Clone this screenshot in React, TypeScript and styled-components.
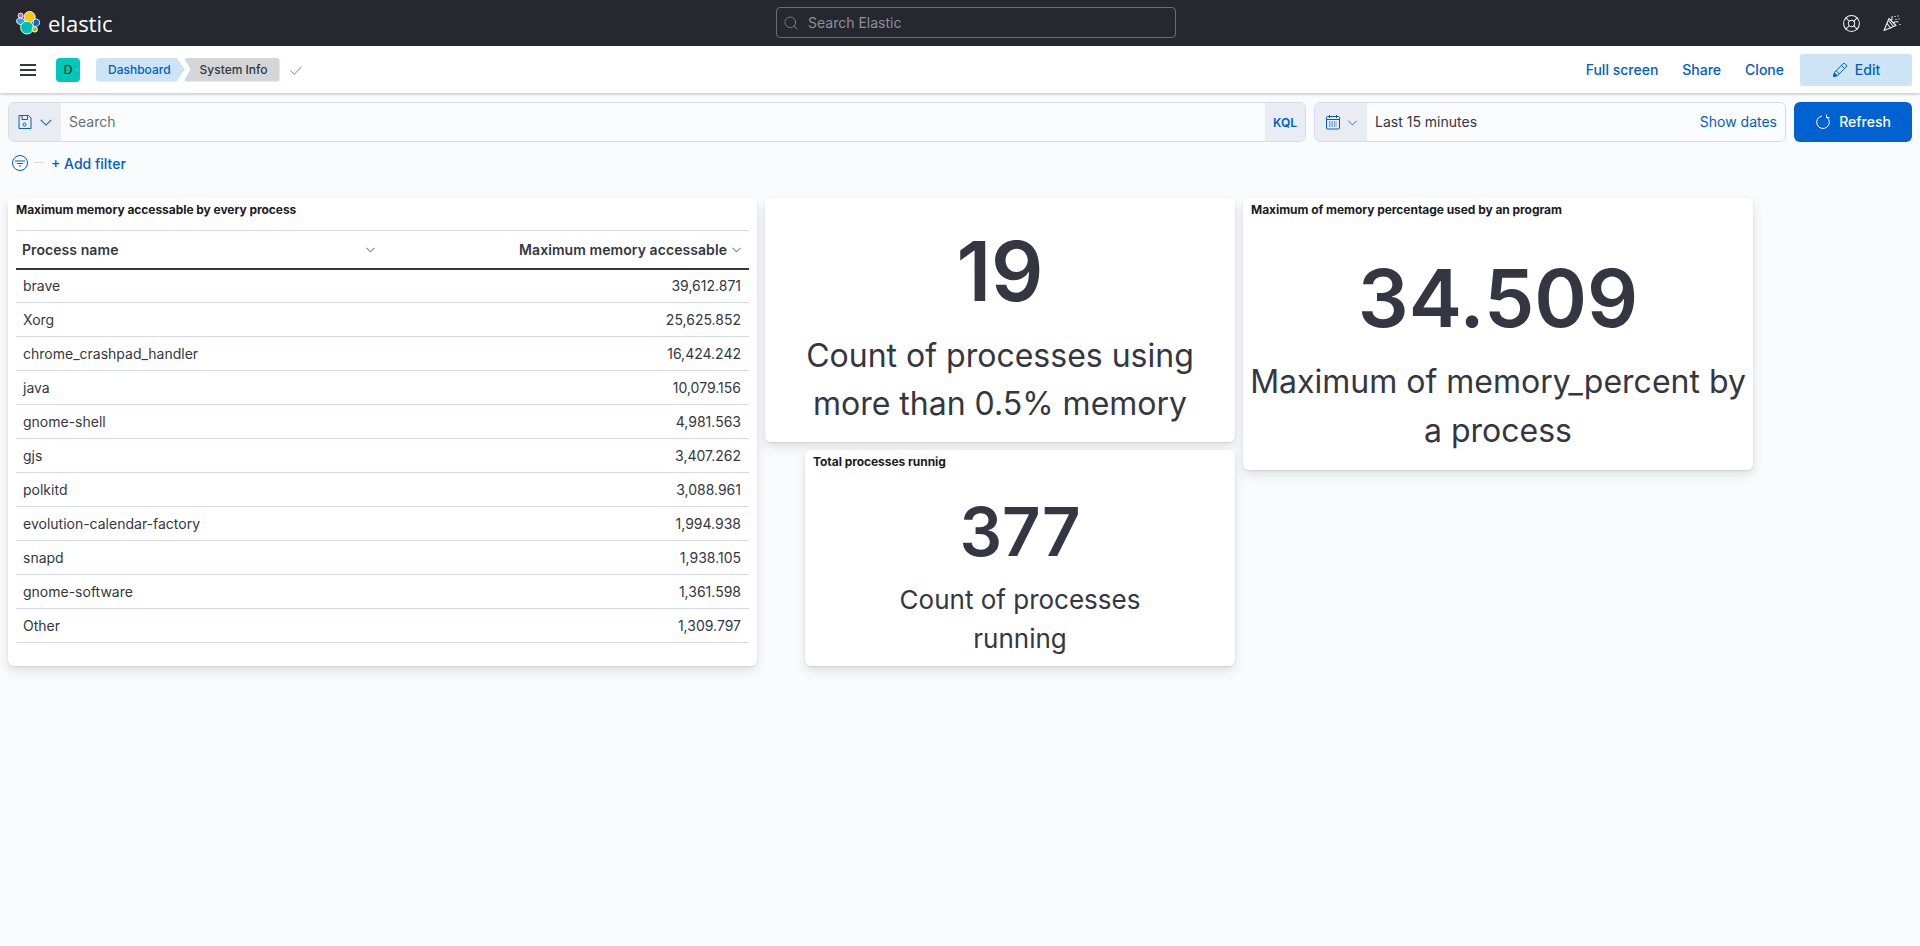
import React from "react";
import styled, { createGlobalStyle } from "styled-components";
import { LifeBuoy, Search } from "lucide-react";

const Global = createGlobalStyle`
  * { box-sizing: border-box; }
  html, body { margin: 0; padding: 0; }
  body {
    background: #fafbfd;
    color: #343741;
    font-family: Inter, "Liberation Sans", sans-serif;
    font-size: 14px;
    min-height: 946px;
    overflow: hidden;
  }
`;

const TopBar = styled.header`
  height: 46px;
  background: #25282f;
  display: grid;
  grid-template-columns: 776px 400px 1fr;
  align-items: center;
`;

const Brand = styled.div`
  display: flex;
  align-items: center;
  gap: 8px;
  padding-left: 16px;
`;

const Wordmark = styled.span`
  color: #fff;
  font-family: "Open Sans", sans-serif;
  font-size: 22px;
  font-weight: 400;
  line-height: 24px;
  margin-top: -1px;
`;

const GlobalSearch = styled.div`
  height: 31px;
  margin-top: -1px;
  border: 1px solid #6a6d73;
  border-radius: 4px;
  display: flex;
  align-items: center;
  gap: 9px;
  padding-left: 6px;
  color: #8d9097;
  font-size: 14px;
`;

const TopIcons = styled.div`
  display: flex;
  justify-content: flex-end;
  align-items: center;
  gap: 22px;
  padding-right: 19px;
  color: #f0f1f3;
`;

const SecondBar = styled.nav`
  height: 47px;
  background: #fff;
  box-shadow: 0 1px 3px rgba(65, 75, 95, 0.35);
  display: flex;
  align-items: center;
  padding: 0 8px 0 20px;
  position: relative;
`;

const Burger = styled.div`
  width: 16px;
  height: 12px;
  border-top: 2px solid #343741;
  border-bottom: 2px solid #343741;
  position: relative;
  &::after {
    content: "";
    position: absolute;
    left: 0;
    right: 0;
    top: 3px;
    height: 2px;
    background: #343741;
  }
`;

const Avatar = styled.div`
  width: 24px;
  height: 24px;
  margin-left: 20px;
  border-radius: 4px;
  background: #00c8b8;
  color: #000;
  font-size: 12px;
  display: flex;
  align-items: center;
  justify-content: center;
`;

const Crumbs = styled.div`
  display: flex;
  margin-left: 16px;
  height: 24px;
`;

const Crumb = styled.div<{ $active?: boolean }>`
  height: 24px;
  display: flex;
  align-items: center;
  font-size: 12px;
  font-weight: 500;
  border-radius: 4px;
  background: ${(p) => (p.$active ? "#d3d5d9" : "#cce4f5")};
  color: ${(p) => (p.$active ? "#343741" : "#005ec4")};
  padding: ${(p) => (p.$active ? "0 12px 0 16px" : "0 14px 0 12px")};
  margin-left: ${(p) => (p.$active ? "-1px" : "0")};
  clip-path: ${(p) =>
    p.$active
      ? "polygon(0 0, 100% 0, 100% 100%, 0 100%, 7px 50%)"
      : "polygon(0 0, calc(100% - 8px) 0, 100% 50%, calc(100% - 8px) 100%, 0 100%)"};
`;

const CheckWrap = styled.span`
  display: flex;
  margin-left: 9px;
  color: #69707d;
`;

const Actions = styled.div`
  margin-left: auto;
  display: flex;
  align-items: center;
  gap: 24px;
`;

const LinkButton = styled.span`
  color: #005ec4;
  font-size: 14px;
  font-weight: 500;
`;

const EditButton = styled.div`
  width: 112px;
  height: 32px;
  margin-left: -8px;
  border-radius: 3px;
  background: #cce4f5;
  color: #005ec4;
  font-size: 14px;
  font-weight: 500;
  display: flex;
  align-items: center;
  justify-content: center;
  gap: 7px;
`;

const QueryRow = styled.div`
  display: flex;
  gap: 8px;
  padding: 9px 8px 0;
`;

const InputGroup = styled.div<{ $width: number }>`
  width: ${(p) => p.$width}px;
  height: 40px;
  border: 1px solid #d6dbe9;
  border-radius: 6px;
  overflow: hidden;
  display: flex;
  align-items: stretch;
  background: #fbfcfd;
`;

const Prepend = styled.div<{ $width: number }>`
  width: ${(p) => p.$width}px;
  flex: none;
  background: #e9edf3;
  color: #005ec4;
  display: flex;
  align-items: center;
  justify-content: center;
  gap: 6px;
`;

const Placeholder = styled.div`
  flex: 1;
  display: flex;
  align-items: center;
  padding: 0 0 2px 8px;
  color: #69707d;
  font-size: 14px;
`;

const Kql = styled.div`
  width: 40px;
  background: #e9edf3;
  color: #005ec4;
  font-size: 12px;
  font-weight: 600;
  display: flex;
  align-items: center;
  justify-content: center;
  flex: none;
`;

const TimeText = styled.div`
  flex: 1;
  padding: 0 0 2px 8px;
  display: flex;
  align-items: center;
  color: #343741;
  font-size: 14px;
`;

const ShowDates = styled.div`
  display: flex;
  align-items: center;
  padding: 0 8px 2px 0;
  color: #005ec4;
  font-size: 14px;
`;

const RefreshButton = styled.div`
  width: 118px;
  height: 40px;
  border-radius: 6px;
  background: #0062d1;
  color: #fff;
  font-size: 14px;
  font-weight: 500;
  padding-bottom: 1px;
  display: flex;
  align-items: center;
  justify-content: center;
  gap: 8px;
`;

const FilterRow = styled.div`
  height: 24px;
  margin-top: 9px;
  padding-left: 12px;
  display: flex;
  align-items: center;
  color: #005ec4;
`;

const Dash = styled.span`
  width: 10px;
  height: 1px;
  margin: 0 0 2px 6px;
  background: #d3dae6;
`;

const AddFilter = styled.span`
  margin-left: 7px;
  font-size: 14px;
  font-weight: 500;
`;

const Board = styled.main`
  display: flex;
  align-items: flex-start;
  gap: 8px;
  padding: 23px 8px 0;
`;

const Panel = styled.section<{ $width: number; $height: number }>`
  width: ${(p) => p.$width}px;
  height: ${(p) => p.$height}px;
  flex: none;
  background: #fff;
  border-radius: 6px;
  box-shadow: 0 1px 2px rgba(65, 75, 95, 0.12), 0 4px 8px rgba(65, 75, 95, 0.1),
    0 8px 16px rgba(65, 75, 95, 0.05);
`;

const PanelTitle = styled.h2`
  margin: 0;
  height: 24px;
  padding-left: 8px;
  font-size: 12px;
  font-weight: 700;
  line-height: 24px;
  letter-spacing: -0.05px;
  color: #1a1c21;
`;

const MiddleColumn = styled.div`
  width: 470px;
  flex: none;
  display: flex;
  flex-direction: column;
  align-items: flex-end;
  gap: 8px;
`;

const TableWrap = styled.div`
  padding: 8px 8px 0;
`;

const DataTable = styled.table`
  width: 733px;
  border-collapse: collapse;
  table-layout: fixed;
  border-top: 1px solid #d3dae6;
`;

const HeadCell = styled.th`
  height: 38px;
  padding: 0 7px 0 6px;
  font-size: 14px;
  font-weight: 600;
  letter-spacing: 0.07px;
  color: #343741;
  border-bottom: 2px solid #343741;
  text-align: left;
`;

const HeadInner = styled.div<{ $right?: boolean }>`
  display: flex;
  align-items: center;
  justify-content: ${(p) => (p.$right ? "flex-end" : "space-between")};
  gap: 4px;
`;

const Cell = styled.td<{ $right?: boolean }>`
  height: 34px;
  padding: 0 8px 0 7px;
  font-size: 14px;
  font-weight: 400;
  color: #343741;
  border-bottom: 1px solid #d3dae6;
  text-align: ${(p) => (p.$right ? "right" : "left")};
`;

const MetricBody = styled.div<{ $top: number; $gap: number }>`
  display: flex;
  flex-direction: column;
  align-items: center;
  text-align: center;
  padding-top: ${(p) => p.$top}px;
  gap: ${(p) => p.$gap}px;
`;

const MetricValue = styled.div<{ $size: number }>`
  font-size: ${(p) => p.$size}px;
  line-height: ${(p) => Math.round(p.$size * 1.2)}px;
  font-weight: 600;
  color: #343741;
`;

const MetricLabel = styled.div<{ $size: number; $line: number; $width: number }>`
  width: ${(p) => p.$width}px;
  font-size: ${(p) => p.$size}px;
  line-height: ${(p) => p.$line}px;
  font-weight: 400;
  color: #343741;
`;

// colored blobs with the white outline the dark header version has
const ElasticLogo = () => (
  <svg width="24" height="24" viewBox="0 0 24 24" stroke="#fff" strokeWidth="0.9">
    <circle cx="4.6" cy="4.6" r="2.5" fill="#f04e98" />
    <circle cx="13.6" cy="6" r="5.6" fill="#fec514" />
    <path d="M2.6 7.2c2.2-.6 5.2 .6 6.6 2.8l-2.2 3.4c-2.6 .8-5.6-.2-6.3-2.4-.5-1.7 .4-3.4 1.9-3.8z" fill="#1ba9f5" />
    <path d="M17.6 8.6c2-1.2 4.900-.6 5.800 1.500 1 2.300-.5 4.700-2.900 5.200-1.300 .2-2.600-.1-3.700-1z" fill="#0b64dd" />
    <circle cx="11" cy="16.6" r="6.4" fill="#00bfb3" />
    <circle cx="18.8" cy="18.4" r="2.7" fill="#93c90e" />
  </svg>
);

const PartyIcon = () => (
  <svg width="18" height="18" viewBox="0 0 18 18" fill="none" stroke="currentColor" strokeWidth="1.1">
    <path d="M1 16.500L6 4.500l7 7z" strokeLinejoin="round" />
    <path d="M4 9.500l4 5M5.500 6.500l5 6" />
    <path d="M8 7c1-1.500 1.500-3 1-5M10 9c1.500-1 3.500-1.500 5.500-1" />
    <path d="M12 2v1M15 1.500v1M13 5v1M16 4.500v1M17 10v1" strokeWidth="1.3" />
  </svg>
);

const Chevron = ({ size = 14 }: { size?: number }) => (
  <svg width={size} height={size} viewBox="0 0 16 16" fill="none" stroke="currentColor" strokeWidth="1.2">
    <path d="M2 5.5l6 6 6-6" />
  </svg>
);

const SaveIcon = () => (
  <svg width="16" height="16" viewBox="0 0 16 16" fill="none" stroke="currentColor">
    <path d="M2 1.5h9.500l2.500 2.500v10.500h-12z" />
    <path d="M5 1.5v4h5.500v-4" />
    <circle cx="7.500" cy="10.500" r="1.500" />
  </svg>
);

const CalendarIcon = () => (
  <svg width="16" height="16" viewBox="0 0 16 16" fill="none" stroke="currentColor">
    <rect x="1.500" y="2.500" width="13" height="12.500" rx="1" />
    <path d="M1.500 5.500h13M4.500 1v3M11.500 1v3" />
    <path d="M4 8h8M4 10h8M4 12h8" strokeDasharray="1.4 1.1" strokeWidth="1.2" />
  </svg>
);

const RefreshIcon = () => (
  <svg width="16" height="16" viewBox="0 0 16 16" fill="none" stroke="currentColor">
    <path d="M11.800 3.200A6.300 6.300 0 1 1 7 2" />
    <path d="M11.500 .500v3h3" />
  </svg>
);

const PencilIcon = () => (
  <svg width="16" height="16" viewBox="0 0 16 16" fill="none" stroke="currentColor">
    <path d="M1.500 14.500l1-4.200 8.400-8.400a1.600 1.600 0 0 1 2.300 0l.9.900a1.600 1.600 0 0 1 0 2.300l-8.400 8.400z" />
    <path d="M4.500 9l3 3M9.500 3.500l3 3" />
    <path d="M1.500 14.500l1-3.500 2.500 2.500z" fill="currentColor" />
  </svg>
);

const FilterIcon = () => (
  <svg width="16" height="16" viewBox="0 0 16 16" fill="none" stroke="currentColor">
    <circle cx="8" cy="8" r="7.500" />
    <path d="M3 6h10M5 8.500h6M7 11h2" />
  </svg>
);

const CheckIcon = () => (
  <svg width="14" height="14" viewBox="0 0 16 16" fill="none" stroke="currentColor">
    <path d="M1.500 8.500l4.500 4.500L14.500 4" />
  </svg>
);

const rows = [
  ["brave", "39,612.871"],
  ["Xorg", "25,625.852"],
  ["chrome_crashpad_handler", "16,424.242"],
  ["java", "10,079.156"],
  ["gnome-shell", "4,981.563"],
  ["gjs", "3,407.262"],
  ["polkitd", "3,088.961"],
  ["evolution-calendar-factory", "1,994.938"],
  ["snapd", "1,938.105"],
  ["gnome-software", "1,361.598"],
  ["Other", "1,309.797"],
];

const App = () => {
  return (
    <>
      <Global />
      <TopBar>
        <Brand>
          <ElasticLogo />
          <Wordmark>elastic</Wordmark>
        </Brand>
        <GlobalSearch>
          <Search size={16} strokeWidth={1.2} />
          Search Elastic
        </GlobalSearch>
        <TopIcons>
          <LifeBuoy size={19} strokeWidth={1.3} />
          <PartyIcon />
        </TopIcons>
      </TopBar>
      <SecondBar>
        <Burger />
        <Avatar>D</Avatar>
        <Crumbs>
          <Crumb>Dashboard</Crumb>
          <Crumb $active>System Info</Crumb>
        </Crumbs>
        <CheckWrap>
          <CheckIcon />
        </CheckWrap>
        <Actions>
          <LinkButton>Full screen</LinkButton>
          <LinkButton>Share</LinkButton>
          <LinkButton>Clone</LinkButton>
          <EditButton>
            <PencilIcon />
            Edit
          </EditButton>
        </Actions>
      </SecondBar>
      <QueryRow>
        <InputGroup $width={1298}>
          <Prepend $width={52}>
            <SaveIcon />
            <Chevron />
          </Prepend>
          <Placeholder>Search</Placeholder>
          <Kql>KQL</Kql>
        </InputGroup>
        <InputGroup $width={472}>
          <Prepend $width={52}>
            <CalendarIcon />
            <Chevron size={11} />
          </Prepend>
          <TimeText>Last 15 minutes</TimeText>
          <ShowDates>Show dates</ShowDates>
        </InputGroup>
        <RefreshButton>
          <RefreshIcon />
          Refresh
        </RefreshButton>
      </QueryRow>
      <FilterRow>
        <FilterIcon />
        <Dash />
        <AddFilter>+ Add filter</AddFilter>
      </FilterRow>
      <Board>
        <Panel $width={749} $height={468}>
          <PanelTitle>Maximum memory accessable by every process</PanelTitle>
          <TableWrap>
            <DataTable>
              <thead>
                <tr>
                  <HeadCell>
                    <HeadInner>
                      Process name
                      <Chevron size={11} />
                    </HeadInner>
                  </HeadCell>
                  <HeadCell>
                    <HeadInner $right>
                      Maximum memory accessable
                      <Chevron size={11} />
                    </HeadInner>
                  </HeadCell>
                </tr>
              </thead>
              <tbody>
                {rows.map(([name, value]) => (
                  <tr key={name}>
                    <Cell>{name}</Cell>
                    <Cell $right>{value}</Cell>
                  </tr>
                ))}
              </tbody>
            </DataTable>
          </TableWrap>
        </Panel>
        <MiddleColumn>
          <Panel $width={470} $height={244}>
            <MetricBody $top={25} $gap={11}>
              <MetricValue $size={82}>19</MetricValue>
              <MetricLabel $size={32} $line={48} $width={440}>
                Count of processes using more than 0.5% memory
              </MetricLabel>
            </MetricBody>
          </Panel>
          <Panel $width={430} $height={216}>
            <PanelTitle>Total processes runnig</PanelTitle>
            <MetricBody $top={18} $gap={8}>
              <MetricValue $size={67}>377</MetricValue>
              <MetricLabel $size={26} $line={39} $width={300}>
                Count of processes running
              </MetricLabel>
            </MetricBody>
          </Panel>
        </MiddleColumn>
        <Panel $width={510} $height={272}>
          <PanelTitle>Maximum of memory percentage used by an program</PanelTitle>
          <MetricBody $top={28} $gap={11}>
            <MetricValue $size={80}>34.509</MetricValue>
            <MetricLabel $size={32} $line={49} $width={500}>
              Maximum of memory_percent by a process
            </MetricLabel>
          </MetricBody>
        </Panel>
      </Board>
    </>
  );
};

export default App;
